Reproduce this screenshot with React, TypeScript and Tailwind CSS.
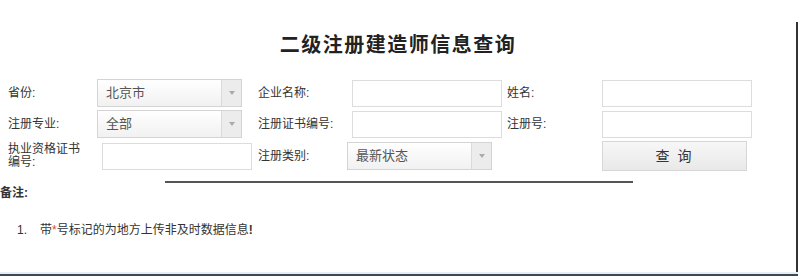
import type { ReactNode } from "react";

const font = { fontFamily: '"Liberation Sans", "Noto Sans CJK SC", sans-serif' };

function Label({ children, w }: { children: ReactNode; w: string }) {
  return <div className={`${w} shrink-0 text-[12px] leading-[13px] text-[#333]`}>{children}</div>;
}

function Select({ value, w }: { value: string; w: string }) {
  return (
    <div className={`${w} flex h-[28px] shrink-0 border border-[#d4d4d4] bg-gradient-to-b from-white to-[#f1f1f1]`}>
      <div className="flex flex-1 items-center pl-[8px] text-[13px] text-[#555]">{value}</div>
      <div className="flex w-[20px] items-center justify-center border-l border-[#dadada] bg-[#ececec]">
        <span className="h-0 w-0 border-x-[3px] border-t-[4px] border-x-transparent border-t-[#aaa]" />
      </div>
    </div>
  );
}

function Input({ w, ml = "" }: { w: string; ml?: string }) {
  return <div className={`${w} ${ml} h-[27px] shrink-0 border border-[#dcdcdc] bg-white`} />;
}

export default function App() {
  return (
    <div className="flex h-[276px] w-[798px] flex-col overflow-hidden bg-white" style={font}>
      <div className="flex flex-1">
        <div className="flex-1">
          <h1 className="pt-[33px] text-center text-[20px] font-bold leading-[24px] tracking-[1.5px] text-[#222]">
            二级注册建造师信息查询
          </h1>

          <div className="mt-[22px] flex flex-col gap-[3px] pl-[8px]">
            <div className="flex items-center">
              <Label w="w-[89px]">省份:</Label>
              <div className="w-[161px]"><Select value="北京市" w="w-[145px]" /></div>
              <Label w="w-[89px]">企业名称:</Label>
              <div className="w-[160px]"><Input w="w-[150px]" ml="ml-[5px]" /></div>
              <Label w="w-[95px]">姓名:</Label>
              <Input w="w-[150px]" />
            </div>
            <div className="flex items-center">
              <Label w="w-[89px]">注册专业:</Label>
              <div className="w-[161px]"><Select value="全部" w="w-[145px]" /></div>
              <Label w="w-[89px]">注册证书编号:</Label>
              <div className="w-[160px]"><Input w="w-[150px]" ml="ml-[5px]" /></div>
              <Label w="w-[95px]">注册号:</Label>
              <Input w="w-[150px]" />
            </div>
            <div className="flex items-center">
              <Label w="w-[89px]">
                执业资格证书
                <br />
                编号:
              </Label>
              <div className="w-[161px]"><Input w="w-[150px]" ml="ml-[5px]" /></div>
              <Label w="w-[89px]">注册类别:</Label>
              <div className="w-[160px]"><Select value="最新状态" w="w-[145px]" /></div>
              <div className="w-[95px]" />
              <button className="h-[30px] w-[145px] border border-[#d6d6d6] bg-gradient-to-b from-[#f7f7f7] to-[#e9e9e9] text-[14px] tracking-[2px] text-[#333]">
                查&nbsp;询
              </button>
            </div>
          </div>

          <div className="ml-[165px] mt-[10px] h-[2px] w-[468px] bg-[#555]" />

          <div className="mt-[3px] text-[12px] font-bold leading-[14px] text-[#333]">备注:</div>
          <div className="mt-[23px] flex text-[12px] leading-[14px] text-[#333]">
            <span className="ml-[17px] w-[23px]">1.</span>
            <span>
              带<span className="text-[#d44]">*</span>号标记的为地方上传非及时数据信息<b>!</b>
            </span>
          </div>
        </div>
        <div className="mt-[22px] w-[2px] bg-[#333]" />
      </div>
      <div className="h-[2px] bg-[#e3eef6]" />
      <div className="h-[2px] bg-[#3d4852]" />
    </div>
  );
}
